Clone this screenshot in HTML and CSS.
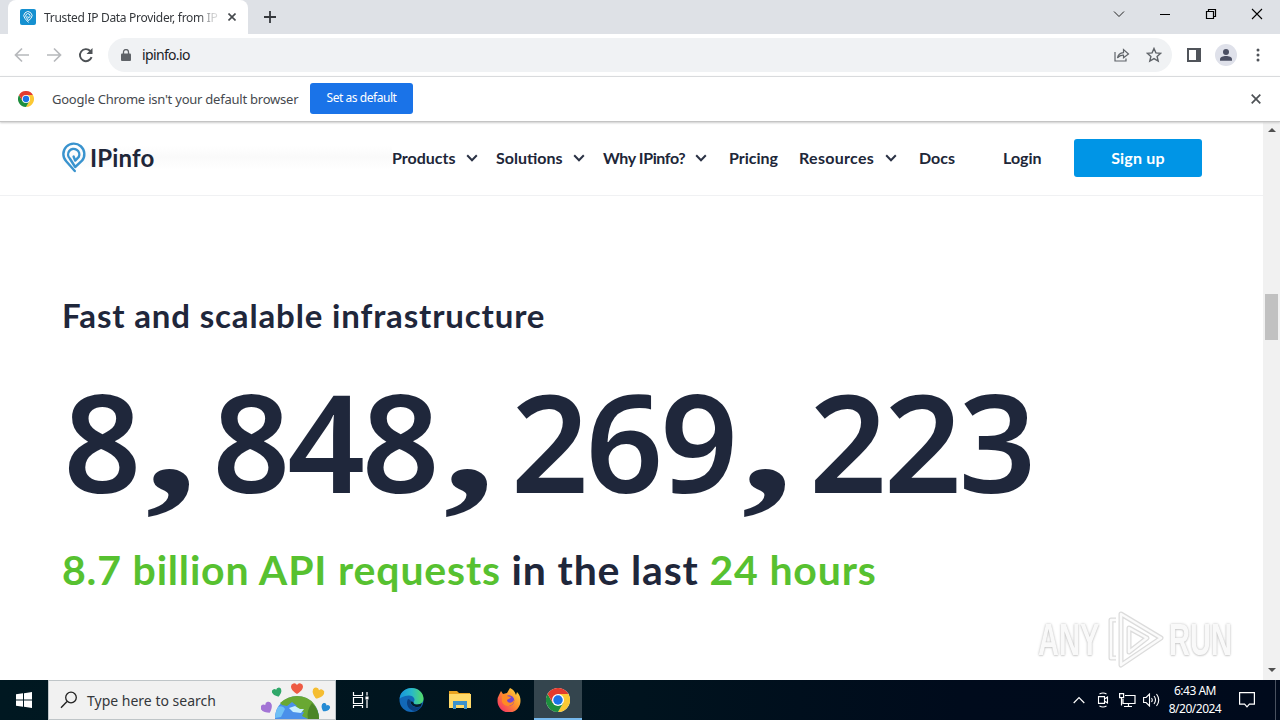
FILE: index.html
```html
<!DOCTYPE html>
<html lang="en">
<head>
<meta charset="utf-8">
<title>Trusted IP Data Provider, from IPinfo</title>
<link rel="stylesheet" href="styles.css">
</head>
<body>
<svg class="defs" width="0" height="0">
  <defs>
    <symbol id="chrome" viewBox="0 0 48 48">
      <circle cx="24" cy="24" r="24" fill="#fff"/>
      <path d="M24 24 3.2 12A24 24 0 0 1 44.8 12H24Z" fill="#e33b2e"/>
      <path d="M24 12H44.8A24 24 0 0 1 24 48L34.4 30Z" fill="#fcc934"/>
      <path d="M13.6 30 3.2 12A24 24 0 0 0 24 48L34.4 30Z" fill="#1e8e3e"/>
      <path d="M3.2 12 13.6 30 24 12Z" fill="#e33b2e"/>
      <circle cx="24" cy="24" r="12" fill="#fff"/><circle cx="24" cy="24" r="9.500" fill="#1a73e8"/>
    </symbol>
    <symbol id="chevron" viewBox="0 0 12 8"><path d="M1.2 1.2 6 6.2l4.800-5" fill="none" stroke="#2b3245" stroke-width="2"/></symbol>
    <symbol id="pin" viewBox="0 0 24 31"><path d="M12.800 29 4.200 19.300A10.500 10.500 0 1 1 20 18.700L13.200 25 7.800 16.500A5.600 5.600 0 1 1 16.800 14.800L13.200 18.600 11.600 14.500" fill="none" stroke="currentColor" stroke-width="2.400" stroke-linejoin="round" stroke-linecap="round"/></symbol>
    <symbol id="heart" viewBox="0 0 12 11"><path d="M6 11C3 9 0 6.500 0 3.500A3.200 3.200 0 0 1 6 2a3.200 3.200 0 0 1 6 1.500C12 6.500 9 9 6 11Z" fill="currentColor"/></symbol>
  </defs>
</svg>

<header class="tabs">
  <div class="tab">
    <span class="favicon"><svg width="10" height="12"><use href="#pin"/></svg></span>
    <span class="tab-title">Trusted IP Data Provider, from IP</span>
    <svg class="tab-close" width="8" height="8" viewBox="0 0 8 8"><path d="m.5.5 7 7m0-7-7 7" stroke="#45494d" stroke-width="1.600"/></svg>
  </div>
  <svg class="tab-new" width="12" height="12" viewBox="0 0 12 12"><path d="M6 0v12M0 6h12" stroke="#35383c" stroke-width="1.800"/></svg>
  <div class="window-buttons">
    <svg width="46" height="28" viewBox="0 0 46 28"><path d="m18 11.500 5 5 5-5" fill="none" stroke="#222"/></svg>
    <svg width="46" height="28" viewBox="0 0 46 28"><path d="M18 14.500h10" stroke="#000"/></svg>
    <svg width="46" height="28" viewBox="0 0 46 28"><path d="M18.500 11.500h7v7h-7zM20.500 11.500v-2h7v7h-2" fill="none" stroke="#000" stroke-width="1.200"/></svg>
    <svg width="46" height="28" viewBox="0 0 46 28"><path d="m18 9 10 10m0-10L18 19" stroke="#000" stroke-width="1.100"/></svg>
  </div>
</header>

<div class="toolbar">
  <svg width="32" height="22" viewBox="0 0 32 22"><path d="M29 11H16m6-6.500L15.500 11l6.500 6.500" fill="none" stroke="#b7b9bc" stroke-width="1.700"/></svg>
  <svg width="32" height="22" viewBox="0 0 32 22"><path d="M15 11h13m-6-6.500 6.500 6.500-6.500 6.500" fill="none" stroke="#b7b9bc" stroke-width="1.700"/></svg>
  <svg width="32" height="22" viewBox="0 0 32 22"><path d="M27.600 13.200A6 6 0 1 1 26.300 7" fill="none" stroke="#4d5155" stroke-width="1.900"/><path d="M28.500 4v6h-6z" fill="#4d5155"/></svg>
  <div class="address">
    <svg width="10" height="12" viewBox="0 0 10 12"><path d="M1 4.500h8q1 0 1 1V11q0 1-1 1H1q-1 0-1-1V5.500q0-1 1-1Z" fill="#5f6368"/><path d="M2.500 5V3a2.500 2.500 0 0 1 5 0v2" fill="none" stroke="#5f6368" stroke-width="1.300"/></svg>
    <span class="url">ipinfo.io</span>
    <svg class="share" width="16" height="14" viewBox="0 0 16 14"><path d="M1 4v9h11v-2.500M3.500 10C4 6.500 6.500 5 9.500 4.700V1.500L14.500 6 9.500 9.800V7.200C7 7 5 8 3.500 10Z" fill="none" stroke="#5f6368" stroke-width="1.200"/></svg>
    <svg width="16" height="16" viewBox="0 0 16 16"><path d="m8 1.500 1.900 4.400 4.800.4-3.600 3.100 1.100 4.700L8 11.600l-4.200 2.500 1.100-4.700-3.600-3.100 4.800-.4Z" fill="none" stroke="#5f6368" stroke-width="1.400"/></svg>
  </div>
  <svg class="panel-icon" width="14" height="14" viewBox="0 0 14 14"><path d="M1 1h12v12H1z" fill="none" stroke="#50545a" stroke-width="2"/><path d="M9 1h4v12H9z" fill="#50545a"/></svg>
  <svg class="profile" width="22" height="22" viewBox="0 0 22 22"><circle cx="11" cy="11" r="11" fill="#dfe1ea"/><circle cx="11" cy="7.900" r="3" fill="#4b4f63"/><path d="M5 16.700v-1.500c0-2 3-3.200 6-3.200s6 1.200 6 3.200v1.500Z" fill="#4b4f63"/></svg>
  <svg class="menu" width="4" height="14" viewBox="0 0 4 14"><g fill="#50545a"><circle cx="2" cy="2" r="1.500"/><circle cx="2" cy="7" r="1.500"/><circle cx="2" cy="12" r="1.500"/></g></svg>
</div>

<div class="infobar">
  <svg width="16" height="16"><use href="#chrome"/></svg>
  <span class="infobar-text">Google Chrome isn't your default browser</span>
  <button class="default-button">Set as default</button>
  <svg class="infobar-close" width="10" height="10" viewBox="0 0 10 10"><path d="m.7.7 8.600 8.600m0-8.600L.7 9.300" stroke="#4d5155" stroke-width="1.700"/></svg>
</div>

<div class="viewport">
  <main class="page">
    <nav class="nav">
      <div class="brand"><svg width="24" height="31"><use href="#pin"/></svg><span>IPinfo</span></div>
      <a class="link products"><span>Products</span><svg width="12" height="8"><use href="#chevron"/></svg></a>
      <a class="link solutions"><span>Solutions</span><svg width="12" height="8"><use href="#chevron"/></svg></a>
      <a class="link why"><span>Why IPinfo?</span><svg width="12" height="8"><use href="#chevron"/></svg></a>
      <a class="link pricing"><span>Pricing</span></a>
      <a class="link resources"><span>Resources</span><svg width="12" height="8"><use href="#chevron"/></svg></a>
      <a class="link docs"><span>Docs</span></a>
      <a class="link login"><span>Login</span></a>
      <a class="signup">Sign up</a>
    </nav>
    <section class="stats">
      <h2>Fast and scalable infrastructure</h2>
      <div class="counter"><span>8</span><span class="comma">,</span><span>8</span><span>4</span><span>8</span><span class="comma">,</span><span>2</span><span>6</span><span>9</span><span class="comma">,</span><span>2</span><span>2</span><span>3</span></div>
      <p class="summary"><em>8.7 billion API requests</em> in the last <em>24 hours</em></p>
    </section>
    <div class="watermark">
      <span>ANY</span>
      <svg width="58" height="62" viewBox="0 0 58 62"><g fill="none" stroke-linejoin="round"><path d="M14 5 54 29 14 56ZM22 19v24l18-14ZM9 11H4v38h5M14 5v46" stroke="#dcdcdc" stroke-width="5"/><path d="M14 5 54 29 14 56ZM22 19v24l18-14ZM9 11H4v38h5M14 5v46" stroke="#fbfbfb" stroke-width="2.500"/></g></svg>
      <span>RUN</span>
    </div>
  </main>
  <div class="scrollbar">
    <svg width="8" height="5" viewBox="0 0 8 5"><path d="M0 5 4 1l4 4Z" fill="#505050"/></svg>
    <div class="thumb"></div>
    <svg class="down" width="8" height="5" viewBox="0 0 8 5"><path d="m0 0 4 4 4-4Z" fill="#505050"/></svg>
  </div>
</div>

<footer class="taskbar">
  <div class="start"><svg width="16" height="16" viewBox="0 0 16 16"><path d="M0 2.300 7 1.300v6.300H0ZM8 1.200 16 0v7.600H8ZM0 8.500h7v6.300l-7-1ZM8 8.500h8V16l-8-1.200Z" fill="#fff"/></svg></div>
  <div class="search">
    <svg width="18" height="18" viewBox="0 0 18 18"><circle cx="11" cy="6.500" r="5.300" fill="none" stroke="#222" stroke-width="1.300"/><path d="m7 10.500-6 6.300" stroke="#222" stroke-width="1.400"/></svg>
    <span>Type here to search</span>
    <svg class="earth" width="70" height="38" viewBox="0 0 70 38">
      <circle cx="36" cy="37" r="22" fill="#4a90ea"/>
      <path d="M19 22q8-7 17-7 11 0 17 8 5 7 5 15H47l-6-3 2-4-7-1-5-2 5-3-5-4-5 4-5-1Z" fill="#69a832"/>
      <path d="M47 38q-2-8 4-16 7 7 7 16Z" fill="#4b8526"/>
      <path d="m28 27 6-2 5 3h4l-3 4-8-1Z" fill="#c8efff"/>
      <path d="M17 26q5-2 7 2l-4 8-6 1q0-6 3-11Z" fill="#6fc0f5"/>
      <use href="#heart" x="29" y="2" width="14" height="11" color="#ee5a43"/>
      <use href="#heart" x="11" y="7" width="10" height="9" color="#30a86a" transform="rotate(-20 16 11)"/>
      <use href="#heart" x="51" y="7" width="12" height="11" color="#f5bd31" transform="rotate(20 57 12)"/>
      <use href="#heart" x="0" y="21" width="12" height="12" color="#a374d5" transform="rotate(-30 6 27)"/>
      <use href="#heart" x="60" y="22" width="9" height="9" color="#258bd4" transform="rotate(30 64 26)"/>
    </svg>
  </div>
  <div class="app"><svg width="18" height="16" viewBox="0 0 18 16"><path d="M1.500 0v3.500h9V0M1.500 16v-2.500h9V16M1.500 5.500h9v6h-9zM15 0v3.500M15 8v8" fill="none" stroke="#fff" stroke-width="1.200"/><path d="M13.500 4.500h3v3h-3z" fill="#fff"/></svg></div>
  <div class="app edge"><svg width="25" height="24" viewBox="0 0 25 24"><defs><linearGradient id="eg"><stop stop-color="#1794dc"/><stop offset=".5" stop-color="#28b8c9"/><stop offset="1" stop-color="#55dc66"/></linearGradient></defs><circle cx="12.500" cy="12" r="12" fill="#1268b8"/><path d="M.6 11C1 4 6.500 0 12.500 0c7 0 12 5 12 10.500 0 4-3 6-6.500 6-3 0-4-1.500-3.500-2.500 3-3-1-7-5-6.500C5 8 1 10 .6 11Z" fill="url(#eg)"/><path d="M9 11c-3 5 1 12 7 12 3-.5 6-3 7-5-6 3-13 0-11.500-6Z" fill="#0b3f80"/><path d="M14.500 14c-.5 1 .5 2.700 3.500 2.500 2 0 4-.7 5-1.700l-1 3.500c-5 2-10.500-.300-10.500-5Z" fill="#061c2b"/></svg></div>
  <div class="app folder"><svg width="22" height="20" viewBox="0 0 22 20"><path d="M0 1h8l2 2h11v5H0Z" fill="#e9a320"/><path d="M0 4h22v14H0Z" fill="#ffd969"/><path d="M4 11h14v8h-3v-4H7v4H4Z" fill="#3b91cd"/></svg></div>
  <div class="app firefox"><svg width="24" height="24" viewBox="0 0 24 24"><defs><linearGradient id="fg" x1="1" x2="0" y2="1"><stop stop-color="#ffe341"/><stop offset=".45" stop-color="#ff922d"/><stop offset="1" stop-color="#f31d72"/></linearGradient></defs><path d="M2 7 4 3l2 3 4-1 3-5c4 2 5 4 6 7l1-3c3 3 3.500 6 3.500 9A11.500 11.500 0 0 1 .5 13Q.5 9 2 7Z" fill="url(#fg)"/><circle cx="12" cy="12.500" r="5.300" fill="#7345d2"/><path d="M5 7c2-1 4-.5 5 1l4 1c-1 2-3 2-4 3 0 3 5 4 7 0 1 6-9 9-12 2Z" fill="#ff8a25"/></svg></div>
  <div class="app active"><svg width="24" height="24"><use href="#chrome"/></svg></div>
  <div class="tray">
    <svg width="12" height="8" viewBox="0 0 12 8"><path d="m.7 7 5.300-5.300L11.300 7" fill="none" stroke="#fff" stroke-width="1.200"/></svg>
    <svg class="meet" width="12" height="16" viewBox="0 0 12 16"><path d="M2.500 2q3.500-2 7 0M2.500 14q3.500 2 7 0M1.500 4.600h6v6.800h-6zM7.500 7 10.500 5v6L7.500 9" fill="none" stroke="#fff" stroke-width="1.100"/></svg>
    <svg class="network" width="17" height="15" viewBox="0 0 17 15"><path d="M6 2.500h10v8H4V6M9.500 10.500v3M5 13.500h8M.6.6h4v4h-4zM2.500 4.500v8" fill="none" stroke="#fff" stroke-width="1.200"/></svg>
    <svg class="sound" width="17" height="14" viewBox="0 0 17 14"><path d="M.6 4.500h2.500L6.500 1v12L3.100 9.500H.6ZM8.500 5q1.500 2 0 4M11 3q3 4 0 8M13.500 1q4.500 6 0 12" fill="none" stroke="#fff" stroke-width="1.100"/></svg>
    <div class="clock"><span>6:43 AM</span><span>8/20/2024</span></div>
    <svg class="notice" width="16" height="16" viewBox="0 0 16 16"><path d="M.6.6h14.800v11.500h-5L8 14.800l-2.400-2.700h-5Z" fill="none" stroke="#fff" stroke-width="1.200"/></svg>
    <i class="desktop-edge"></i>
  </div>
</footer>
</body>
</html>
```

FILE: styles.css
```css
* { box-sizing: border-box; }
body { margin: 0; width: 1280px; height: 720px; overflow: hidden; display: flex; flex-direction: column; background: #fff; font-family: "Noto Sans", "Open Sans", sans-serif; }
svg { display: block; flex: none; }
span { white-space: nowrap; }
.defs { display: none; }

.tabs { height: 34px; flex: none; background: #dee1e6; display: flex; align-items: flex-start; padding-left: 8px; }
.tab { width: 240px; height: 34px; background: #fff; border-radius: 8px 8px 0 0; display: flex; align-items: center; padding-left: 12px; }
.favicon { width: 16px; height: 16px; border-radius: 2px; background: #1590d0; color: #fff; display: grid; place-items: center; }
.tab-title { width: 174px; margin-left: 8px; font-size: 12px; letter-spacing: -.3px; color: #35383c; mask-image: linear-gradient(90deg, #000 154px, rgba(0, 0, 0, .2) 170px); }
.tab-close { margin-left: 10px; }
.tab-new { margin: 11px 0 0 16px; }
.window-buttons { margin-left: auto; display: flex; }

.toolbar { height: 42px; flex: none; display: flex; align-items: center; }
.toolbar > svg:nth-child(3) { margin-right: 12px; }
.address { width: 1064px; height: 34px; border-radius: 17px; background: #f0f2f4; display: flex; align-items: center; padding: 0 10px 0 13px; }
.url { margin-left: 11px; margin-top: -1px; font-size: 14px; letter-spacing: -.65px; color: #202124; }
.share { margin: 0 16px 0 auto; }
.panel-icon { margin-left: 15px; }
.profile { margin-left: 14px; }
.menu { margin-left: 19px; }

.infobar { height: 46px; flex: none; display: flex; align-items: center; border-top: 1px solid #d9dbdd; border-bottom: 1px solid #c4c4c4; padding: 0 19px 0 18px; position: relative; z-index: 1; box-shadow: 0 1px 2px #ccc; }
.infobar-text { width: 258px; margin-left: 18px; font-size: 13px; letter-spacing: -.23px; color: #45494e; }
.default-button { width: 103px; height: 31px; margin-top: -2px; padding: 0 0 1px; border: 0; border-radius: 3px; background: #1a73e8; color: #fff; font: 12px "Noto Sans", sans-serif; letter-spacing: -.45px; }
.infobar-close { margin-left: auto; }

.viewport { height: 558px; flex: none; display: flex; }
.page { width: 1263px; position: relative; }
.nav { height: 74px; border-bottom: 1px solid #f0f1f3; padding: 0 61px 2px 62px; display: flex; align-items: center; font-family: Lato, sans-serif; }
.brand { width: 330px; height: 60px; display: flex; align-items: center; gap: 4px; color: #3993ce; background: linear-gradient(#fff 30%, #fafafa 48%, #fff 70%); }
.brand span { font-size: 24px; font-weight: 700; color: #202638; letter-spacing: .15px; }
.link { display: flex; align-items: center; font-size: 16px; font-weight: 700; color: #202638; }
.link svg { margin-left: auto; }
.products { width: 86px; margin-right: 18px; }
.solutions { width: 89px; margin-right: 18px; }
.why { width: 104px; margin-right: 22px; }
.why span { letter-spacing: -.4px; }
.pricing { width: 70px; }
.resources { width: 98px; margin-right: 22px; letter-spacing: .3px; }
.docs { width: 84px; }
.login { width: 71px; }
.signup { width: 128px; height: 38px; flex: none; border-radius: 3px; background: #0095e6; color: #fff; font-size: 16px; font-weight: 700; letter-spacing: .2px; display: grid; place-items: center; }

.stats { padding: 97px 0 0 62px; color: #1f273b; }
h2 { margin: 0; height: 44px; font: 700 33px/44px Lato, sans-serif; letter-spacing: .85px; white-space: nowrap; }
.counter { height: 160px; margin-top: 24px; margin-left: 3px; display: flex; font: 600 136px/160px "Noto Sans", "Open Sans", sans-serif; }
.counter span { width: 74.600px; height: 160px; display: flex; justify-content: center; }
.counter .comma { font: 700 158px/160px "Liberation Serif", serif; transform: translate(-6px, -2px) scaleX(1.3); }
.summary { margin: 21px 0 0; font: 700 41px/56px Lato, sans-serif; letter-spacing: .82px; white-space: nowrap; }
.summary em { font-style: normal; color: #57c130; }

.watermark { position: absolute; left: 1038px; top: 487px; width: 195px; height: 62px; display: flex; align-items: center; justify-content: space-between; }
.watermark span { width: 64px; font: 700 44px/50px "Liberation Sans Narrow", "Liberation Sans", sans-serif; color: #f9f9f9; text-shadow: 0 0 3px #bbb, 0 1px 2px #ddd; transform: scaleX(.66); transform-origin: left; }

.scrollbar { width: 17px; background: #f1f1f1; display: flex; flex-direction: column; align-items: center; padding: 5px 0 7px; }
.thumb { width: 13px; height: 46px; margin-top: 162px; background: #c1c1c1; }
.down { margin-top: auto; }

.taskbar { height: 40px; flex: none; display: flex; background: linear-gradient(90deg, #001821, #00131e 50%, #000b1c 75%, #000a1c); color: #fff; }
.start { width: 48px; display: grid; place-items: center; }
.search { width: 288px; height: 40px; background: #f1f1f1; border: 1px solid #bfc5c8; display: flex; align-items: center; padding-left: 11px; }
.search span { margin-left: 9px; font-size: 14px; color: #34373b; }
.earth { margin-left: auto; margin-right: 4px; }
.app { width: 49px; display: grid; place-items: center; }
.edge { width: 52px; }
.folder { width: 46px; }
.firefox { width: 51px; }
.active { width: 48px; background: #34454e; border-bottom: 2px solid #76b9ed; padding-top: 2px; }
.tray { margin-left: auto; width: 207px; display: flex; align-items: center; }
.meet { margin-left: 12px; }
.network { margin-left: 10px; }
.sound { margin-left: 7px; }
.clock { width: 60px; margin-left: 5px; display: flex; flex-direction: column; align-items: center; font-size: 12px; line-height: 18px; letter-spacing: -.5px; }
.notice { margin-left: 14px; }
.desktop-edge { width: 1px; height: 40px; margin-left: auto; margin-right: 4px; background: #49515f; }
```
